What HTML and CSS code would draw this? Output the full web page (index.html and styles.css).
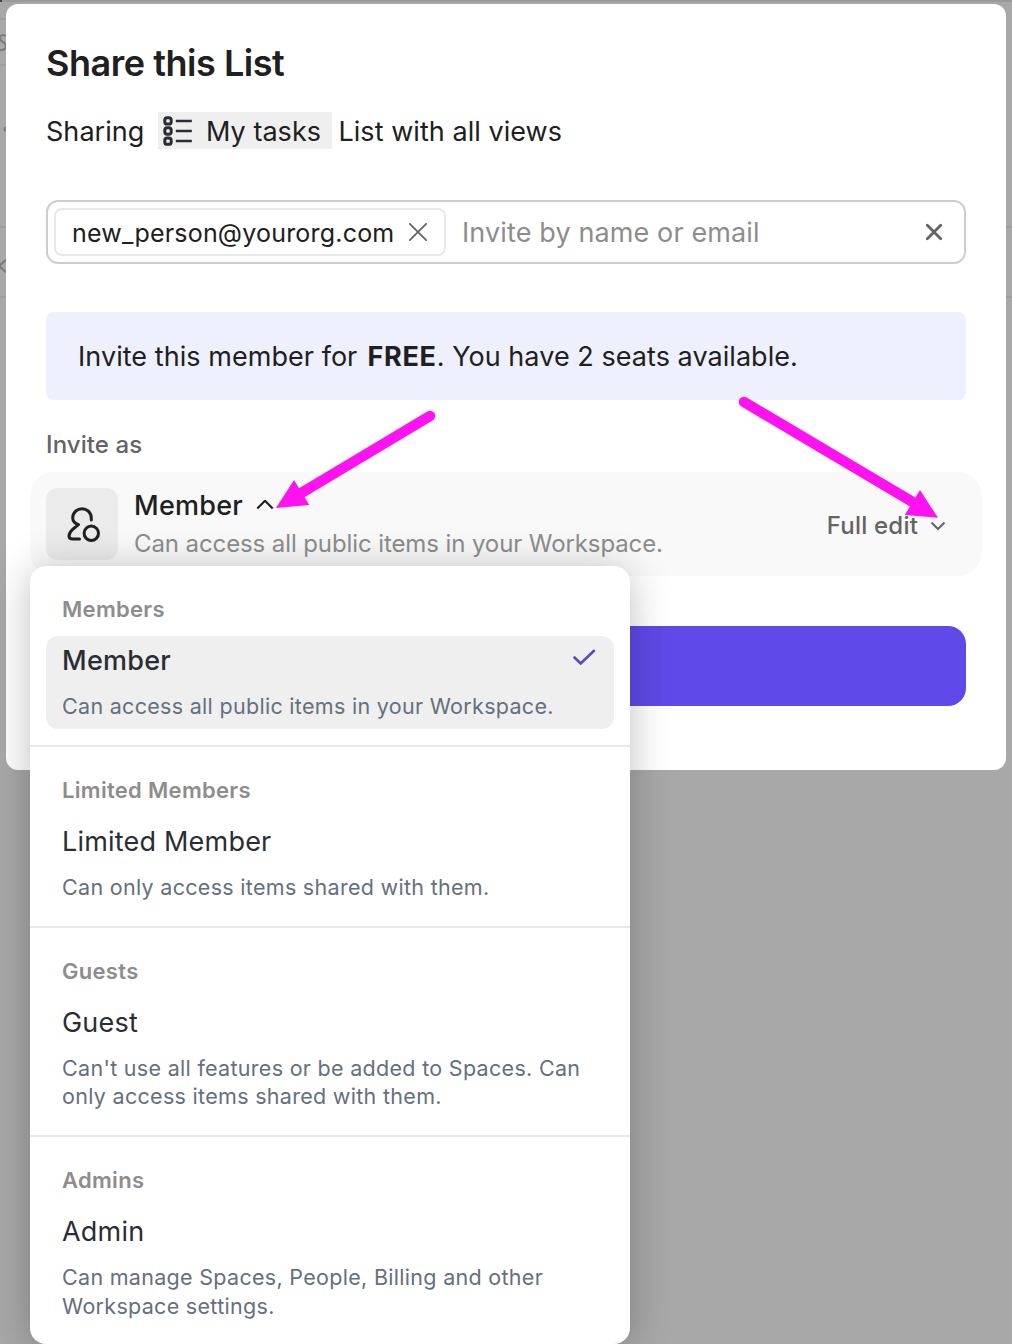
FILE: index.html
```html
<!DOCTYPE html>
<html lang="en">
<head>
<meta charset="utf-8">
<title>Share this List</title>
<link rel="stylesheet" href="styles.css">
</head>
<body>
<svg class="backdrop" width="1012" height="310" viewBox="0 0 1012 310" fill="none" stroke="#9d9d9d" stroke-width="2">
  <path d="M0 1H1012" stroke="#9a9a9a"/>
  <path d="M0 1H2" stroke="#444"/>
  <path d="M0 19H6M0 65H6M0 227H6M0 297H6M1006 227H1012M1006 297H1012"/>
  <path d="M6 36C3 34 0 35 0 38C0 43 6 41 6 46C6 50 1 51 -2 49M7 259L-1 266L7 273" stroke="#7c7c7c"/>
  <circle cx="6" cy="129" r="1.5" stroke="#7c7c7c"/>
</svg>

<main class="modal">
  <h1 class="title">Share this List</h1>
  <p class="sharing">
    <span>Sharing</span>
    <span class="list-chip">
      <svg width="30" height="30" viewBox="0 0 30 30" fill="none" stroke="#2a2e34">
        <g stroke-width="3"><rect x="2.8" y="1.7" width="6.4" height="6.4" rx="2.4"/><rect x="2.8" y="11.8" width="6.4" height="6.4" rx="2.4"/><rect x="2.8" y="21.9" width="6.4" height="6.4" rx="2.4"/></g>
        <path d="M13.8 5H29.8M13.8 15H29.8M13.8 25H29.8" stroke-width="2.6"/>
      </svg>
      <span>My tasks</span>
    </span>
    <span>List with all views</span>
  </p>

  <div class="invite-field">
    <span class="email-chip">
      <span class="email">new_person@yourorg.com</span>
      <svg width="20" height="20" viewBox="0 0 20 20" stroke="#646464" stroke-width="1.8" stroke-linecap="round"><path d="M1.8 1.8L18.2 18.2M18.2 1.8L1.8 18.2"/></svg>
    </span>
    <span class="placeholder">Invite by name or email</span>
    <svg class="clear" width="20" height="20" viewBox="0 0 20 20" stroke="#646464" stroke-width="2.8" stroke-linecap="round"><path d="M3.3 3.3L16.7 16.7M16.7 3.3L3.3 16.7"/></svg>
  </div>

  <p class="banner">Invite this member for <b>FREE</b>. You have 2 seats available.</p>

  <h2 class="label">Invite as</h2>
  <section class="role-row">
    <span class="role-icon">
      <svg width="72" height="72" viewBox="0 0 72 72" fill="none" stroke="#202020" stroke-width="3" stroke-linecap="round" stroke-linejoin="round">
        <path d="M45.3 32V30A9.3 9.3 0 0 0 26.7 30C26.7 33 28.6 35.3 32.5 36.7L26.5 41.5C24 44 23 46.5 23 48C23 50.5 24.5 51 27 51H33.5"/>
        <circle cx="45.3" cy="45.3" r="7.2"/>
      </svg>
    </span>
    <div class="role-text">
      <div class="role-name">
        <span>Member</span>
        <svg width="18" height="12" viewBox="0 0 18 12" fill="none" stroke="#202020" stroke-width="2.2"><path d="M1.3 8.5L9 0.8L16.7 8.5"/></svg>
      </div>
      <div class="role-note">Can access all public items in your Workspace.</div>
    </div>
    <div class="permission">
      <span>Full edit</span>
      <svg width="16" height="10" viewBox="0 0 16 10" fill="none" stroke="#646464" stroke-width="2"><path d="M1.5 1.5L8 8L14.5 1.5"/></svg>
    </div>
  </section>
  <div class="submit"></div>
</main>

<div class="menu">
  <section class="group">
    <h3 class="group-title">Members</h3>
    <div class="item selected">
      <div class="item-name"><span>Member</span>
        <svg class="check" width="24" height="18" viewBox="0 0 24 18" fill="none" stroke="#5b43d6" stroke-width="2.6" stroke-linecap="round"><path d="M2.5 9.5L8.7 15.5L22 2.8"/></svg>
      </div>
      <p class="item-note">Can access all public items in your Workspace.</p>
    </div>
  </section>
  <section class="group">
    <h3 class="group-title">Limited Members</h3>
    <div class="item">
      <div class="item-name">Limited Member</div>
      <p class="item-note">Can only access items shared with them.</p>
    </div>
  </section>
  <section class="group">
    <h3 class="group-title">Guests</h3>
    <div class="item">
      <div class="item-name">Guest</div>
      <p class="item-note">Can't use all features or be added to Spaces. Can<br>only access items shared with them.</p>
    </div>
  </section>
  <section class="group">
    <h3 class="group-title">Admins</h3>
    <div class="item">
      <div class="item-name">Admin</div>
      <p class="item-note">Can manage Spaces, People, Billing and other<br>Workspace settings.</p>
    </div>
  </section>
</div>

<svg class="arrows" width="1012" height="600" viewBox="0 0 1012 600" fill="#ff12f0" stroke="#ff12f0">
  <path d="M430 416L298 495M744 402L916 504" stroke-width="10.5" stroke-linecap="round"/>
  <path d="M276 508L294 480L309.3 505ZM938 517.8L920 490L904.7 515Z" stroke="none"/>
</svg>
</body>
</html>
```
FILE: styles.css
```css
* { box-sizing: border-box; }
body {
  margin: 0;
  position: relative;
  height: 1344px;
  overflow: hidden;
  padding: 4px 6px;
  background: #a8a8a8;
  color: #202020;
  font-family: Inter, "Liberation Sans", sans-serif;
}
h1, h2, h3, p { margin: 0; }
svg { display: block; flex: none; }
span { white-space: nowrap; }
.backdrop, .arrows { position: absolute; left: 0; top: 0; }

.modal {
  position: relative;
  height: 766px;
  padding: 35px 40px 0;
  border-radius: 12px;
  background: #fff;
}
.title { font-size: 36px; line-height: 48px; font-weight: 600; letter-spacing: -0.47px; }
.sharing {
  display: flex;
  align-items: center;
  height: 37px;
  margin-top: 25px;
  font-size: 27px;
  line-height: 35px;
  letter-spacing: 0.05px;
}
.sharing span { padding-top: 1px; }
.sharing .list-chip {
  display: flex;
  align-items: center;
  gap: 13.5px;
  width: 174px;
  height: 37px;
  margin: 0 6px 0 14px;
  padding: 0 0 0 4px;
  background: #efefef;
}
.invite-field {
  display: flex;
  align-items: center;
  height: 64px;
  margin-top: 51px;
  padding: 0 20px 0 6px;
  border: 2px solid #cdcdcd;
  border-radius: 12px;
}
.email-chip {
  display: flex;
  align-items: center;
  justify-content: space-between;
  width: 392px;
  height: 48px;
  padding: 0 16px;
  border: 2px solid #e8e8e8;
  border-radius: 8px;
  font-size: 25px;
}
.email { padding-top: 1px; letter-spacing: 0.2px; }
.placeholder { margin-left: 16px; font-size: 27px; letter-spacing: 0.12px; color: #8d8d8d; }
.clear { margin-left: auto; }
.banner {
  height: 88px;
  margin-top: 48px;
  padding-left: 32px;
  border-radius: 8px;
  background: #eef0fe;
  font-size: 27px;
  line-height: 90px;
  letter-spacing: 0.05px;
}
.banner b { margin-left: 2.5px; font-weight: 700; letter-spacing: 0.7px; }
.label {
  margin-top: 29px;
  font-size: 24px;
  line-height: 32px;
  font-weight: 500;
  letter-spacing: 0.1px;
  color: #646464;
}
.role-row {
  display: flex;
  align-items: flex-start;
  height: 104px;
  margin: 11px -16px 0;
  padding: 16px;
  border-radius: 24px;
  background: #f9f9f9;
}
.role-icon { border-radius: 12px; background: #ebebeb; }
.role-text { margin-left: 16px; }
.role-name {
  display: flex;
  align-items: center;
  gap: 13px;
  font-size: 27px;
  line-height: 36px;
  font-weight: 500;
  letter-spacing: 0.25px;
}
.role-note { margin-top: 4px; font-size: 24px; line-height: 32px; letter-spacing: -0.1px; color: #8d8d8d; }
.permission {
  display: flex;
  align-items: center;
  gap: 12px;
  margin: 20px 20px 0 auto;
  font-size: 24px;
  line-height: 36px;
  font-weight: 500;
  letter-spacing: 0.2px;
  color: #646464;
}
.submit { height: 80px; margin-top: 50px; border-radius: 18px; background: #5f49e8; }

.menu {
  position: absolute;
  left: 30px;
  top: 566px;
  width: 600px;
  height: 778px;
  border-radius: 16px;
  background: #fff;
  box-shadow: 0 4px 40px rgba(0, 0, 0, 0.25);
}
.group { padding: 16px; border-bottom: 2px solid #e8e8e8; }
.group:last-child { border-bottom: 0; }
.group-title {
  padding-left: 16px;
  font-size: 22px;
  line-height: 54px;
  font-weight: 600;
  letter-spacing: 0.3px;
  color: #8d8d8d;
}
.item { padding: 8px 16px; border-radius: 12px; color: #2a2e34; }
.selected { background: #efefef; }
.item-name {
  display: flex;
  align-items: center;
  justify-content: space-between;
  font-size: 27px;
  line-height: 34px;
  letter-spacing: 0.2px;
}
.selected .item-name { font-weight: 500; letter-spacing: 0.25px; }
.check { margin: -8px 2px 0 0; }
.item-note {
  margin-top: 14.4px;
  font-size: 21.5px;
  line-height: 28.4px;
  letter-spacing: 0.3px;
  white-space: nowrap;
  color: #656f7d;
}
```
